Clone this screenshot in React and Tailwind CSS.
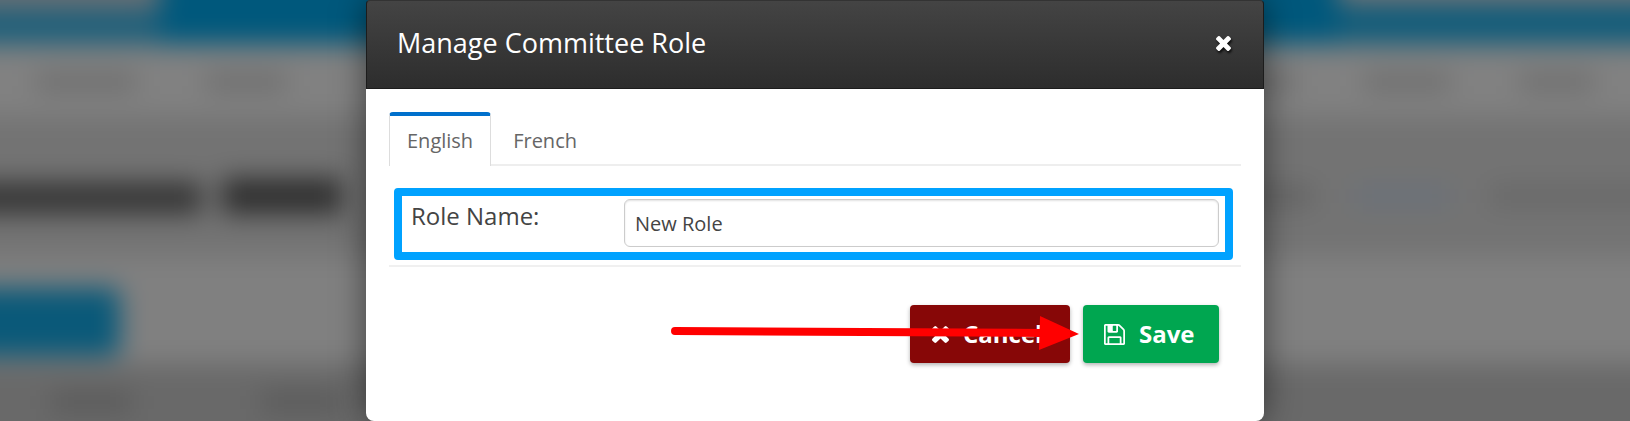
import { useState } from 'react';

const TimesIcon = ({ className }) => (
  <svg viewBox="302 366 1188 1188" fill="currentColor" className={className} aria-hidden="true">
    <path d="M1490 1322q0 40-28 68l-136 136q-28 28-68 28t-68-28l-294-294-294 294q-28 28-68 28t-68-28l-136-136q-28-28-28-68t28-68l294-294-294-294q-28-28-28-68t28-68l136-136q28-28 68-28t68 28l294 294 294-294q28-28 68-28t68 28l136 136q28 28 28 68t-28 68l-294 294 294 294q28 28 28 68z" />
  </svg>
);

const SaveIcon = ({ className }) => (
  <svg viewBox="0 128 1536 1536" fill="currentColor" className={className} aria-hidden="true">
    <path d="M384 1536h768v-384h-768v384zm896 0h128v-896q0-14-10-38.5t-20-34.5l-281-281q-10-10-34-20t-39-10v416q0 40-28 68t-68 28h-576q-40 0-68-28t-28-68v-416h-128v1280h128v-416q0-40 28-68t68-28h832q40 0 68 28t28 68v416zm-384-928v-320q0-13-9.5-22.5t-22.5-9.5h-192q-13 0-22.5 9.5t-9.5 22.5v320q0 13 9.5 22.5t22.5 9.5h192q13 0 22.5-9.5t9.5-22.5zm640 32v928q0 40-28 68t-68 28h-1344q-40 0-68-28t-28-68v-1344q0-40 28-68t68-28h928q40 0 88 20t76 48l280 280q28 28 48 76t20 88z" />
  </svg>
);

// Dimmed, out of focus page behind the dialog
const Backdrop = () => (
  <div className="absolute inset-0 overflow-hidden bg-[#717171]" aria-hidden="true">
    <div className="absolute -inset-10 flex flex-col blur-[13px]">
      <div className="flex h-[84px] justify-between bg-[#00587c]">
        <div className="w-[200px] bg-linear-to-b from-[#6a7074] from-50% to-[#1d5f7a] to-65%" />
        <div className="w-[332px] bg-linear-to-b from-[#777] from-45% to-[#125c7a] to-55%" />
      </div>
      <div className="flex h-[72px] items-center justify-between bg-[#818181] px-[76px] pt-1">
        <div className="flex gap-[70px]">
          <div className="h-4 w-[100px] bg-[#6b6b6b]" />
          <div className="h-4 w-[80px] bg-[#6b6b6b]" />
        </div>
        <div className="flex gap-[70px]">
          <div className="h-4 w-[50px] bg-[#6b6b6b]" />
          <div className="h-4 w-[86px] bg-[#6b6b6b]" />
          <div className="h-4 w-[74px] bg-[#6b6b6b]" />
        </div>
      </div>
      <div className="flex h-[140px] items-center justify-between bg-[#737373] pt-5">
        <div className="flex items-end gap-5">
          <div className="h-8 w-[242px] bg-[#363636]" />
          <div className="h-9 w-[120px] bg-[#303030]" />
        </div>
        <div className="flex gap-10">
          <div className="h-5 w-[70px] bg-[#646464]" />
          <div className="h-5 w-[96px] bg-[#6a717a]" />
          <div className="h-5 w-[180px] bg-[#686868]" />
        </div>
      </div>
      <div className="h-[108px] bg-[#808080] pt-8">
        <div className="h-[68px] w-[160px] rounded-lg bg-[#0a5979]" />
      </div>
      <div className="flex flex-1 items-start gap-[130px] bg-[#696969] pt-7 pl-[92px]">
        <div className="h-5 w-[80px] bg-[#5a5a5a]" />
        <div className="h-5 w-[80px] bg-[#5a5a5a]" />
      </div>
    </div>
  </div>
);

const TABS = ['English', 'French'];

const App = () => {
  const [tab, setTab] = useState('English');
  const [names, setNames] = useState({ English: 'New Role', French: '' });

  return (
    <div className="relative font-['Open_Sans',sans-serif]">
      <Backdrop />

      <div
        role="dialog"
        aria-labelledby="dialog-title"
        className="relative mx-auto max-w-[898px] rounded-lg bg-white shadow-[0_0_32px_rgba(0,0,0,0.5)]"
      >
        <header className="flex h-[89px] items-center justify-between rounded-t border border-[#1c1c1c] border-t-[#333] bg-linear-to-b from-[#444] to-[#2d2d2d] pr-8 pb-[3px] pl-[30px] text-white">
          <h1 id="dialog-title" className="text-[27px] leading-9">
            Manage Committee Role
          </h1>
          <button type="button" aria-label="Close" className="drop-shadow-[1px_2px_1px_rgba(0,0,0,0.8)]">
            <TimesIcon className="size-[15px]" />
          </button>
        </header>

        <div className="px-[23px] pt-[23px] pb-[58px]">
          <div role="tablist" className="flex h-[54px] border-b-2 border-[#eee] text-xl text-[#666]">
            {TABS.map((name) => (
              <button
                key={name}
                type="button"
                role="tab"
                aria-selected={tab === name}
                onClick={() => setTab(name)}
                className={
                  tab === name
                    ? '-mb-[2px] rounded-t border-x border-t-4 border-x-[#ddd] border-t-[#0070cc] bg-white px-[17px]'
                    : 'px-[22px] pt-[6px]'
                }
              >
                {name}
              </button>
            ))}
          </div>

          <div className="mt-[22px] mr-2 ml-[5px] flex items-start rounded border-8 border-[#00a2ff] pt-[3px] pr-[6px] pb-[5px] pl-[9px] text-[#444]">
            <label htmlFor="role-name" className="w-[213px] text-2xl leading-[34px]">
              Role Name:
            </label>
            <input
              id="role-name"
              type="text"
              value={names[tab]}
              onChange={(e) => setNames({ ...names, [tab]: e.target.value })}
              className="h-12 min-w-0 flex-1 rounded-md border border-[#ccc] px-[10px] text-xl shadow-[inset_0_1px_2px_rgba(0,0,0,0.12)] outline-none"
            />
          </div>

          <hr className="mt-[5px] border-t-2 border-[#f0f0f0]" />

          <div className="mt-[38px] flex justify-end gap-[13px] pr-[22px] text-2xl font-bold text-white">
            <div className="relative">
              <button
                type="button"
                className="flex h-[58px] min-w-[160px] items-center justify-start gap-[14px] rounded bg-[#870707] pl-[22px] shadow-[0_2px_4px_rgba(0,0,0,0.3)]"
              >
                <TimesIcon className="size-[17px]" />
                Cancel
              </button>
              {/* arrow pointing at the save button */}
              <svg
                viewBox="0 0 408 36"
                className="pointer-events-none absolute top-[10px] -right-[9px] h-9 w-[408px]"
                aria-hidden="true"
              >
                <path d="M4 16 L370 18" stroke="#f00" strokeWidth="8" strokeLinecap="round" />
                <path d="M369 1 L408 19 L368 35 Z" fill="#f00" />
              </svg>
            </div>
            <button
              type="button"
              className="flex h-[58px] min-w-[136px] items-center justify-start gap-[14px] rounded bg-[#00a650] pl-[21px] shadow-[0_2px_4px_rgba(0,0,0,0.3)]"
            >
              <SaveIcon className="size-[21px]" />
              Save
            </button>
          </div>
        </div>
      </div>
    </div>
  );
};

export default App;
